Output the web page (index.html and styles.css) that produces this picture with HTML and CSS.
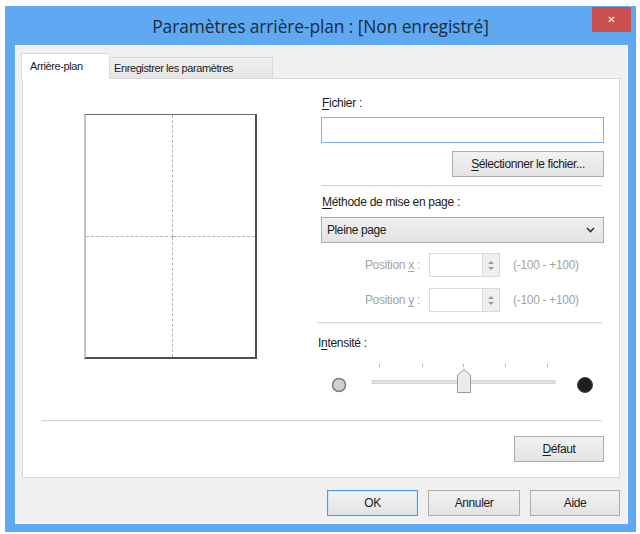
FILE: index.html
```html
<!DOCTYPE html>
<html lang="fr">
<head>
<meta charset="utf-8">
<title>Paramètres arrière-plan</title>
<link rel="stylesheet" href="styles.css">
</head>
<body>
<div class="window">
  <div class="titlebar">
    <span class="tb-spacer"></span>
    <div class="title">Paramètres arrière-plan : [Non enregistré]</div>
    <div class="tb-right"><div class="close">&#x2715;</div></div>
  </div>
  <div class="client">
    <div class="tabs">
      <div class="tab active">Arrière-plan</div>
      <div class="tab">Enregistrer les paramètres</div>
    </div>
    <div class="panel">
      <div class="preview-col">
        <div class="page">
          <div class="cell c1"></div><div class="cell c2"></div>
          <div class="cell c3"></div><div class="cell c4"></div>
        </div>
      </div>
      <div class="settings">
        <div class="label"><u>F</u>ichier :</div>
        <div class="textbox"></div>
        <div class="btn-row"><div class="btn wide"><u>S</u>électionner le fichier...</div></div>
        <div class="hr"></div>
        <div class="label label-m"><u>M</u>éthode de mise en page :</div>
        <div class="select"><span>Pleine page</span>
          <svg class="chev" width="9" height="6" viewBox="0 0 9 6"><path d="M1 1 L4.5 4.5 L8 1" fill="none" stroke="#333" stroke-width="1.6"/></svg>
        </div>
        <div class="pos-row first">
          <span class="pos-label">Position <u>x</u> :</span>
          <div class="spin"><div class="spin-field"></div><div class="spin-btns"><span class="up"></span><span class="down"></span></div></div>
          <span class="range">(-100 - +100)</span>
        </div>
        <div class="pos-row">
          <span class="pos-label">Position <u>y</u> :</span>
          <div class="spin"><div class="spin-field"></div><div class="spin-btns"><span class="up"></span><span class="down"></span></div></div>
          <span class="range">(-100 - +100)</span>
        </div>
        <div class="hr hr2"></div>
        <div class="label label-i">I<u>n</u>tensité :</div>
        <svg class="slider" width="283" height="32" viewBox="0 0 283 32">
          <g stroke="#b5b5b5" stroke-width="1">
            <line x1="58.5" y1="0" x2="58.5" y2="3"/>
            <line x1="101.5" y1="0" x2="101.5" y2="3"/>
            <line x1="142.5" y1="0" x2="142.5" y2="3"/>
            <line x1="184.5" y1="0" x2="184.5" y2="3"/>
            <line x1="226.5" y1="0" x2="226.5" y2="3"/>
          </g>
          <rect x="51" y="16.5" width="183" height="3" fill="#e3e3e3" stroke="#d6d6d6" stroke-width="1"/>
          <path d="M136.5 28.5 V11 L143 5.5 L149.5 11 V28.5 Z" fill="#ececec" stroke="#9a9a9a" stroke-width="1"/>
          <circle cx="18" cy="21" r="6.5" fill="#cfcfcf" stroke="#7d7d7d" stroke-width="1.5"/>
          <circle cx="264" cy="21" r="7.5" fill="#1f1f1f" stroke="#444" stroke-width="1"/>
        </svg>
      </div>
      <div class="hr full"></div>
      <div class="panel-foot"><div class="btn def"><u>D</u>éfaut</div></div>
    </div>
    <div class="buttons">
      <div class="btn ok">OK</div>
      <div class="btn">Annuler</div>
      <div class="btn aide">Aide</div>
    </div>
  </div>
</div>
</body>
</html>
```

FILE: styles.css
```css
* { box-sizing: border-box; }
html, body { margin: 0; padding: 0; background: #ffffff; }
body {
  font-family: "Liberation Sans", Arial, sans-serif;
  font-size: 12px;
  color: #1b1b1b;
}
.window {
  margin: 6px 0 0 5px;
  width: 631px;
  height: 526px;
  background: #5ea9f1;
  display: flex;
  flex-direction: column;
  padding: 0 8px 8px 10px;
}
.titlebar {
  height: 39px;
  margin: 0 -8px 0 -10px;
  display: grid;
  grid-template-columns: 1fr auto 1fr;
  align-items: start;
}
.title {
  font-family: "Open Sans", "Noto Sans", sans-serif;
  font-size: 17.4px;
  color: #1d2b3c;
  padding-top: 8px;
  white-space: nowrap;
  letter-spacing: -0.1px;
}
.tb-right { display: flex; justify-content: flex-end; padding-top: 1px; padding-right: 5px; }
.close {
  width: 39px;
  height: 25px;
  background: #c9504f;
  color: #ffffff;
  font-family: "DejaVu Sans", sans-serif;
  font-size: 10px;
  font-weight: bold;
  display: flex;
  align-items: center;
  justify-content: center;
}
.client {
  flex: 1;
  background: #f0f0f0;
  border: 1px solid #f7f7f7;
  padding: 7px 7px 7px 6px;
  display: flex;
  flex-direction: column;
}
.tabs {
  display: flex;
  align-items: flex-end;
  height: 25px;
  position: relative;
  z-index: 1;
}
.tab {
  font-size: 11px;
  letter-spacing: -0.4px;
  height: 21px;
  padding: 4px 4px 0 4px;
  border: 1px solid #d9d9d9;
  border-bottom: none;
  background: linear-gradient(#f0f0f0, #e6e6e6);
  color: #222;
  white-space: nowrap;
}
.tab.active {
  height: 26px;
  margin-bottom: -1px;
  margin-left: -1px;
  width: 88px;
  padding: 6px 0 0 8px;
  background: #ffffff;
  border-right: none;
}
.tab + .tab { width: 164px; margin-left: 0; }
.panel {
  height: 400px;
  background: #ffffff;
  border: 1px solid #d9d9d9;
  display: grid;
  grid-template-columns: 298px 283px 1fr;
  grid-template-rows: auto auto 1fr;
  align-content: start;
}
.preview-col { padding: 35px 0 0 61px; }
.page {
  width: 173px;
  height: 245px;
  border-top: 1px solid #6b6b6b;
  border-right: 2px solid #4f4f4f;
  border-bottom: 2px solid #4f4f4f;
  border-left: 2px solid #c4c4c4;
  display: grid;
  grid-template-columns: 87px 1fr;
  grid-template-rows: 122px 1fr;
}
.c1 { border-right: 1px dashed #b4b4b4; border-bottom: 1px dashed #b4b4b4; }
.c2 { border-bottom: 1px dashed #b4b4b4; }
.c3 { border-right: 1px dashed #b4b4b4; }
.settings { padding-top: 17px; display: flex; flex-direction: column; }
.label { height: 14px; line-height: 14px; letter-spacing: -0.3px; padding-left: 1px; }
.textbox {
  margin-top: 7px;
  height: 26px;
  border: 1px solid #7eb4ea;
  background: #fff;
}
.btn-row { display: flex; justify-content: flex-end; margin-top: 8px; }
.btn {
  height: 26px;
  border: 1px solid #adadad;
  background: linear-gradient(#f2f2f2, #e3e3e3);
  display: flex;
  align-items: center;
  justify-content: center;
  letter-spacing: -0.4px;
  color: #1b1b1b;
  font-size: 12px;
}
.btn.wide { width: 152px; }
.hr { height: 2px; margin-top: 8px; border-top: 1px solid #d5d5d5; border-bottom: 1px solid #f4f4f4; margin-right: 2px; }
.label-m { margin-top: 8px; }
.select {
  margin-top: 8px;
  height: 26px;
  border: 1px solid #acacac;
  background: linear-gradient(#efefef, #e4e4e4);
  display: flex;
  align-items: center;
  justify-content: space-between;
  padding: 0 8px 0 5px;
  letter-spacing: -0.4px;
}
.pos-row {
  display: flex;
  align-items: center;
  height: 24px;
  margin-top: 11px;
  color: #a3a3a3;
}
.pos-row.first { margin-top: 10px; }
.pos-label { width: 99px; text-align: right; letter-spacing: -0.3px; }
.spin { margin-left: 9px; width: 71px; height: 24px; display: flex; border: 1px solid #dadada; }
.spin-field { flex: 1; background: #fff; }
.spin-btns {
  width: 17px;
  border-left: 1px solid #dadada;
  background: #efefef;
  display: flex;
  flex-direction: column;
  align-items: center;
  justify-content: center;
  gap: 3px;
}
.spin-btns .up { width: 0; height: 0; border-left: 3px solid transparent; border-right: 3px solid transparent; border-bottom: 3px solid #9a9a9a; }
.spin-btns .down { width: 0; height: 0; border-left: 3px solid transparent; border-right: 3px solid transparent; border-top: 3px solid #9a9a9a; }
.range { margin-left: 13px; letter-spacing: -0.3px; }
.hr2 { margin-top: 10px; margin-left: -4px; }
.label-i { margin-top: 12px; padding-left: 0; margin-left: -3px; }
.slider { margin-top: 14px; display: block; }
.hr.full { grid-column: 1 / -1; margin: 24px 17px 0 18px; }
.panel-foot { grid-column: 1 / -1; display: flex; justify-content: flex-end; padding: 14px 15px 0 0; }
.btn.def { width: 90px; }
.buttons {
  margin-top: 12px;
  display: flex;
  justify-content: flex-end;
  gap: 10px;
}
.buttons .btn { width: 92px; }
.buttons .btn.ok { width: 91px; border-color: #4a9ae6; box-shadow: inset 0 0 0 1px #cde4f8; }
.buttons .btn.aide { width: 90px; }
u { text-decoration: underline; text-underline-offset: 2px; }
```
